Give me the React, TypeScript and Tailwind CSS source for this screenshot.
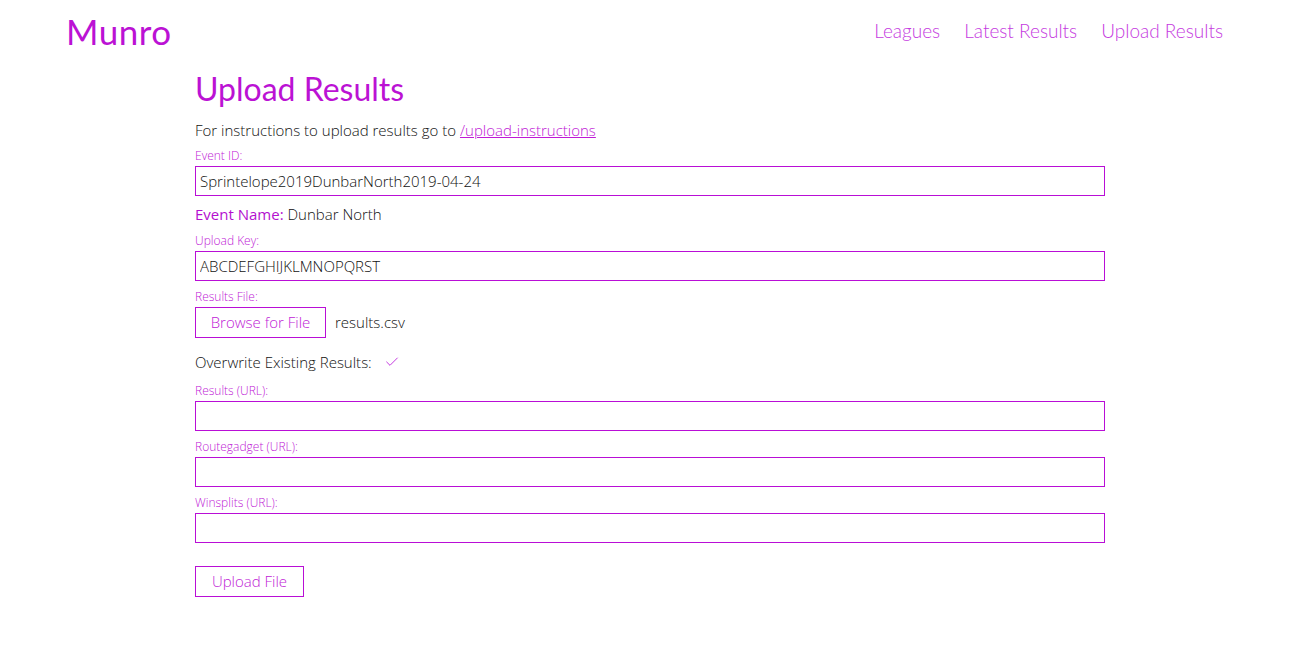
import { Check } from "lucide-react"

const HEAD_FONT = { fontFamily: "Lato, 'Open Sans', sans-serif" }

function Label({ children }: { children: React.ReactNode }) {
    return <label className="block h-[14px] text-[12px] leading-[14px] text-[#c01ad6]">{children}</label>
}

function TextInput({ value }: { value?: string }) {
    return (
        <input
            readOnly
            value={value ?? ""}
            className="mt-[3px] block h-[30px] w-full border border-[#b90ed6] px-[4px] text-[15px] text-[#111] outline-none"
        />
    )
}

export default function App() {
    return (
        <div className="min-h-[649px] bg-white text-[#111]" style={{ fontFamily: "'Open Sans', 'Noto Sans', sans-serif" }}>
            {/* Top bar */}
            <header className="flex h-[62px] items-center justify-between pl-[66px] pr-[77px]">
                <div className="text-[35px] font-normal tracking-[0.5px] text-[#bb12d4]" style={HEAD_FONT}>
                    Munro
                </div>
                <nav className="flex gap-[24px] text-[19px] font-light text-[#c53ae0]" style={HEAD_FONT}>
                    <a>Leagues</a>
                    <a>Latest Results</a>
                    <a>Upload Results</a>
                </nav>
            </header>

            <main className="mx-auto w-[910px] font-light">
                <h1 className="mt-[7px] text-[32px] leading-[40px] font-normal text-[#bb12d4]" style={HEAD_FONT}>
                    Upload Results
                </h1>
                <p className="mt-[11px] text-[15px] leading-[20px]">
                    For instructions to upload results go to{" "}
                    <a className="text-[#c01ad6] underline">/upload-instructions</a>
                </p>

                <div className="mt-[9px]">
                    <Label>Event ID:</Label>
                    <TextInput value="Sprintelope2019DunbarNorth2019-04-24" />
                </div>

                <p className="mt-[8px] text-[15px] leading-[20px]">
                    <span className="font-normal text-[#b40fcf]">Event Name:</span> Dunbar North
                </p>

                <div className="mt-[10px]">
                    <Label>Upload Key:</Label>
                    <TextInput value="ABCDEFGHIJKLMNOPQRST" />
                </div>

                <div className="mt-[9px]">
                    <Label>Results File:</Label>
                    <div className="mt-[3px] flex items-center gap-[9px]">
                        <button className="h-[31px] w-[131px] border border-[#b90ed6] text-[15px] font-light text-[#c01ad6]">
                            Browse for File
                        </button>
                        <span className="text-[15px]">results.csv</span>
                    </div>
                </div>

                <div className="mt-[13px] flex items-center gap-[12px] text-[15px] leading-[22px]">
                    <span>Overwrite Existing Results:</span>
                    <Check size={16} strokeWidth={1.5} className="text-[#c53ae0]" />
                </div>

                <div className="mt-[11px]">
                    <Label>Results (URL):</Label>
                    <TextInput />
                </div>
                <div className="mt-[9px]">
                    <Label>Routegadget (URL):</Label>
                    <TextInput />
                </div>
                <div className="mt-[9px]">
                    <Label>Winsplits (URL):</Label>
                    <TextInput />
                </div>

                <button className="mt-[23px] h-[31px] w-[109px] border border-[#b90ed6] text-[15px] font-light text-[#c01ad6]">
                    Upload File
                </button>
            </main>
        </div>
    )
}
